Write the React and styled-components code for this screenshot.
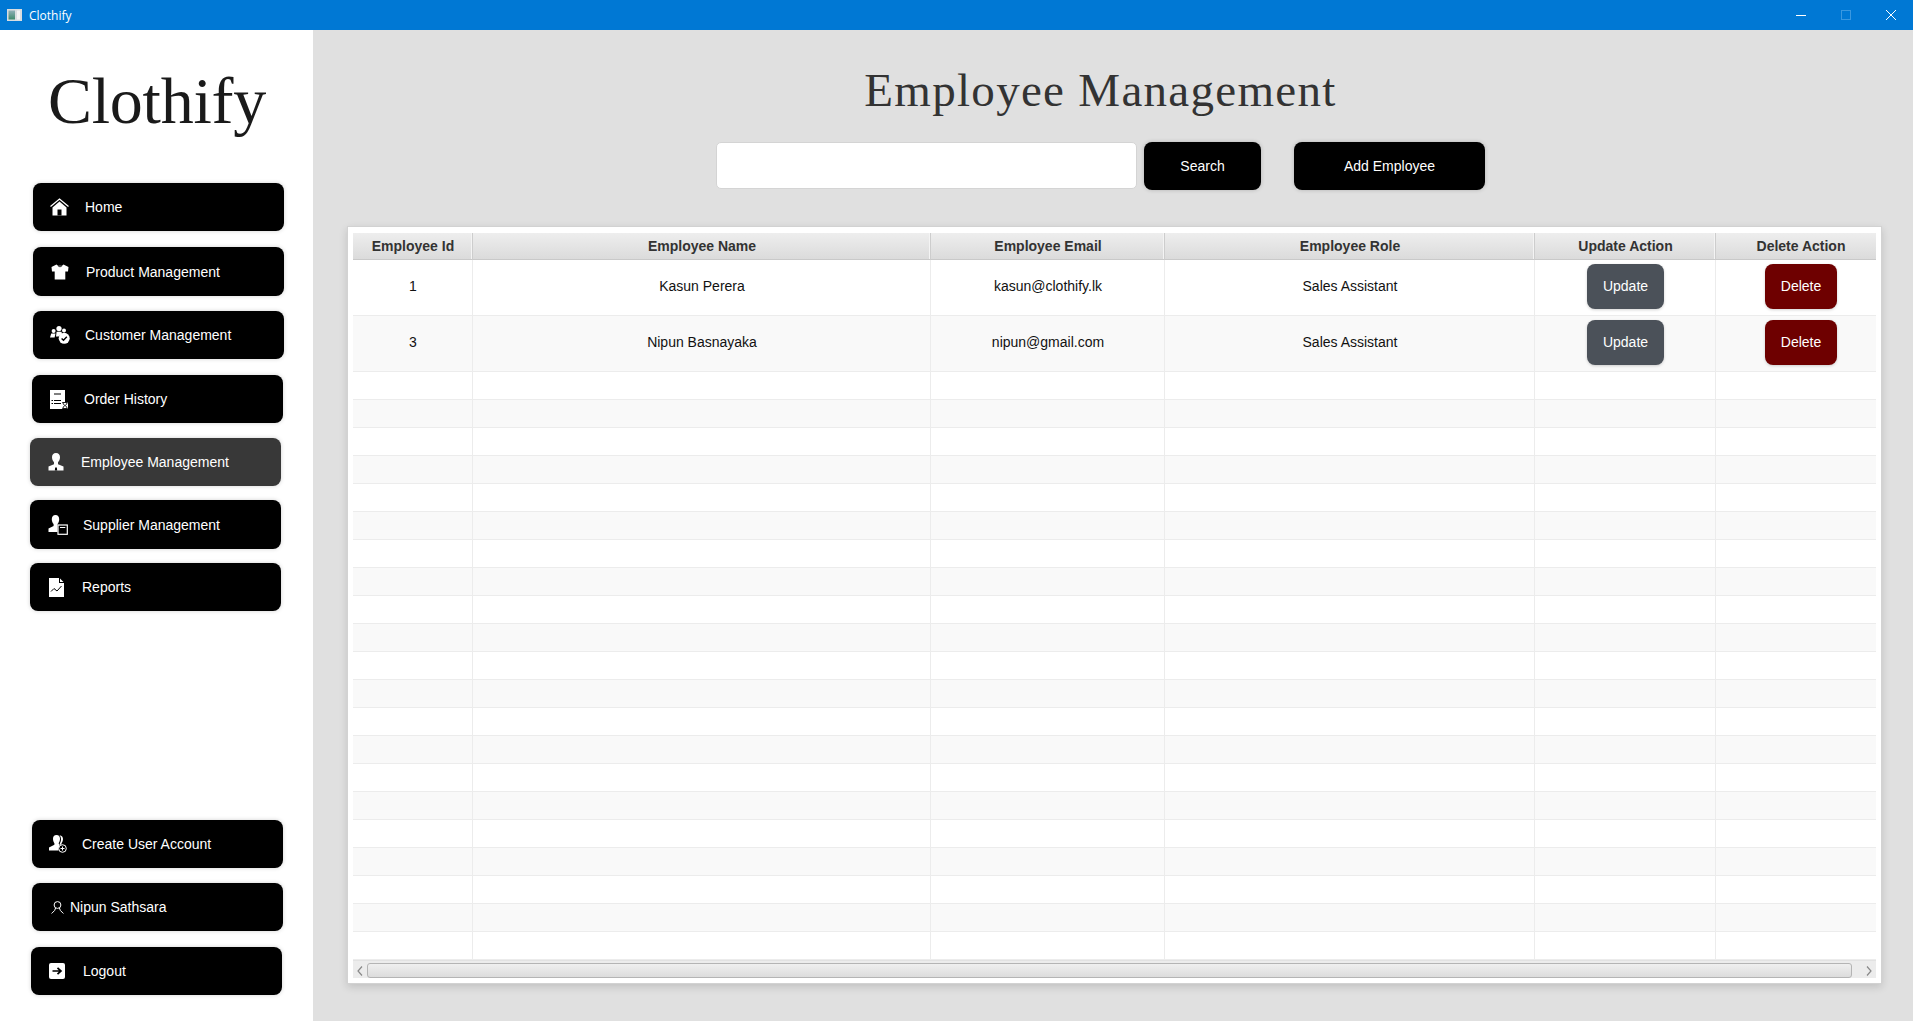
import React from 'react';
import styled, { createGlobalStyle } from 'styled-components';

const GlobalStyle = createGlobalStyle`
  html, body, #root {
    margin: 0;
    height: 100%;
  }
  body {
    overflow: hidden;
    font-family: "Liberation Sans", Arial, sans-serif;
    background: #e0e0e0;
  }
  * { box-sizing: border-box; }
`;

const Window = styled.div`
  width: 1913px;
  height: 1021px;
  display: flex;
  flex-direction: column;
`;

const TitleBar = styled.header`
  height: 30px;
  flex-shrink: 0;
  background: #0078d4;
  color: #fff;
  display: flex;
  align-items: center;
  padding-left: 7px;
  font: 12px "Open Sans", sans-serif;
`;

const AppName = styled.span`
  margin-left: 7px;
`;

const WindowControls = styled.div`
  margin-left: auto;
  display: flex;
  align-items: center;
  padding-right: 17px;
  gap: 35px;
  svg { display: block; }
`;

const Body = styled.div`
  flex: 1;
  display: flex;
  min-height: 0;
`;

const Sidebar = styled.aside`
  width: 313px;
  flex-shrink: 0;
  background: #fff;
  display: flex;
  flex-direction: column;
  padding-bottom: 26px;
`;

const Logo = styled.div`
  height: 104px;
  margin-top: 33px;
  padding-left: 48px;
  font: 66px/76px "Liberation Serif", serif;
  letter-spacing: -0.25px;
  color: #1a1a1a;
`;

const NavGroup = styled.nav`
  display: flex;
  flex-direction: column;
  margin-top: ${p => p.$top || '16px'};
`;

const NavButton = styled.div`
  position: relative;
  width: 251px;
  height: ${p => p.$h || 48}px;
  margin-left: ${p => p.$x}px;
  margin-top: ${p => p.$gap}px;
  padding-left: ${p => p.$iconAt}px;
  display: flex;
  align-items: center;
  background: ${p => (p.$active ? '#383838' : '#000')};
  border-radius: 8px;
  box-shadow: 0 0 4px rgba(0, 0, 0, 0.18);
  color: #fff;
  font-size: 14px;
  svg { display: block; flex-shrink: 0; }
`;

const NavLabel = styled.span`
  margin-left: ${p => p.$gap}px;
`;

const Main = styled.main`
  flex: 1;
  display: flex;
  flex-direction: column;
  padding: 0 31px 37px 34px;
  min-width: 0;
`;

const PageTitle = styled.h1`
  margin: 32px 28px 0 0;
  height: 80px;
  text-align: center;
  font: 400 47px/56px "Liberation Serif", serif;
  letter-spacing: 1.3px;
  color: #333;
`;

const Toolbar = styled.div`
  height: 48px;
  display: flex;
  align-items: flex-start;
  padding-left: 369px;
`;

const SearchInput = styled.input`
  width: 421px;
  height: 47px;
  border: 1px solid #d4d4d4;
  border-radius: 5px;
  background: #fff;
  outline: none;
`;

const BlackButton = styled.button`
  width: ${p => p.$w}px;
  height: 48px;
  margin-left: ${p => p.$gap}px;
  border: 0;
  border-radius: 8px;
  background: #000;
  color: #fff;
  font: 14px "Liberation Sans", sans-serif;
  box-shadow: 0 0 4px rgba(0, 0, 0, 0.2);
`;

const Card = styled.section`
  margin-top: 36px;
  height: 758px;
  background: #fff;
  border: 1px solid #d2d2d2;
  padding: 6px 5px 5px;
  box-shadow: 0 3px 8px rgba(0, 0, 0, 0.14);
  display: flex;
  flex-direction: column;
`;

const TableWrap = styled.div`
  height: 727px;
  overflow: hidden;
  flex-shrink: 0;
`;

const Table = styled.table`
  width: 1533px;
  table-layout: fixed;
  border-collapse: separate;
  border-spacing: 0;
`;

const Col = styled.col`
  width: ${p => p.$w}px;
`;

const HeadCell = styled.th`
  height: 27px;
  padding: 0 0 0 1px;
  background: linear-gradient(#eeeeee, #dbdbdb);
  border-bottom: 1px solid #c9c9c9;
  border-right: 1px solid #cdcdcd;
  box-shadow: inset -1px 0 0 #f4f4f4;
  color: #333;
  font-size: 14px;
  font-weight: 700;
  text-align: center;
  vertical-align: middle;
`;

const Row = styled.tr`
  background: ${p => (p.$odd ? '#f9f9f9' : '#fff')};
`;

const Cell = styled.td`
  height: ${p => (p.$tall ? 56 : 28)}px;
  padding: 0 0 ${p => (p.$tall ? 3 : 1)}px 1px;
  border-bottom: 1px solid #ececec;
  border-right: 1px solid #ececec;
  color: #111;
  font-size: 14px;
  text-align: center;
  vertical-align: middle;
`;

const ActionButton = styled.button`
  display: block;
  margin: 0 auto;
  width: ${p => p.$w}px;
  height: 45px;
  border: 0;
  border-radius: 8px;
  background: ${p => p.$bg};
  color: #fff;
  font: 14px "Liberation Sans", sans-serif;
  box-shadow: 0 1px 3px rgba(0, 0, 0, 0.18);
`;

const ScrollBar = styled.div`
  height: 18px;
  flex-shrink: 0;
  display: flex;
  align-items: center;
  background: #ececec;
  border-top: 1px solid #e2e2e2;
  padding-top: 2px;
`;

const ScrollArrow = styled.div`
  width: 14px;
  flex-shrink: 0;
  display: flex;
  justify-content: center;
  svg { display: block; }
`;

const ScrollThumb = styled.div`
  flex: 1;
  height: 15px;
  margin-right: 10px;
  border: 1px solid #b4b4b4;
  border-radius: 3px;
  background: linear-gradient(#efefef, #dcdcdc);
`;

const HomeIcon = () => (
  <svg width="19" height="18" viewBox="0 0 19 18">
    <path d="M0.5 8.5 9.5 1 18.5 8.5" fill="none" stroke="#fff" strokeWidth="1.3" />
    <path d="M2.5 9.5 9.5 3.6 16.5 9.5V17.5H2.5Z" fill="#fff" />
    <rect x="7.5" y="11.5" width="4" height="6" fill="#000" />
  </svg>
);

const ShirtIcon = () => (
  <svg width="18" height="16" viewBox="0 0 18 16">
    <path d="M5.5 0.5 7 1.8h4L12.5 0.5 17.5 3 17 7.4 14.3 7.4V15.5H3.7V7.4L1 7.4 0.5 3Z" fill="#fff" />
    <path d="M7 1.8Q9 4 11 1.8" fill="none" stroke="#000" strokeWidth="0.8" />
  </svg>
);

const CustomerIcon = () => (
  <svg width="20" height="18" viewBox="0 0 20 18">
    <circle cx="9" cy="2.6" r="2.6" fill="#fff" />
    <circle cx="3.6" cy="5" r="2" fill="#fff" />
    <circle cx="14" cy="4.6" r="2" fill="#fff" />
    <path d="M0 11.5 1.2 7.5H5.5L4.6 11.5Z M6 10.5 6.6 5.8H11.5L12 8 8.5 10.5Z" fill="#fff" />
    <circle cx="14.2" cy="12.3" r="5.5" fill="#fff" />
    <path d="M11.6 12.4 13.5 14.3 16.8 10.8" fill="none" stroke="#000" strokeWidth="1.4" />
  </svg>
);

const OrderIcon = () => (
  <svg width="18" height="19" viewBox="0 0 18 19">
    <path d="M0 0H15V12H18V19H0Z" fill="#fff" />
    <path d="M4 3.5H11V4.5H4Z M4 10H11V11H4Z M4 13H11V14H4Z M1.5 10H3V11H1.5Z M1.5 13H3V14H1.5Z" fill="#000" />
    <path d="M12.5 12.5H17.5L15.5 15.5 17.5 18.5H12.5L14.5 15.5Z" fill="none" stroke="#000" strokeWidth="0.9" />
  </svg>
);

const EmployeeIcon = () => (
  <svg width="16" height="18" viewBox="0 0 16 18">
    <path d="M8 0C5.4 0 4 1.8 4 4.2 4 6.2 5 8.2 6 9.2V11.2L0.5 13.5V17.5H15.5V13.5L10 11.2V9.2C11 8.2 12 6.2 12 4.2 12 1.8 10.6 0 8 0Z" fill="#fff" />
    <path d="M7.2 14.5H8.8L9.2 17.5H6.8Z" fill="#000" />
  </svg>
);

const SupplierIcon = () => (
  <svg width="20" height="20" viewBox="0 0 20 20">
    <path d="M7.5 0C5 0 3.8 1.9 3.8 4.2 3.8 6.2 4.6 8 5.6 9V11L0.5 13.5V17H9.5V11.5L9.5 9C10.4 8 11.2 6.2 11.2 4.2 11.2 1.9 10 0 7.5 0Z" fill="#fff" />
    <rect x="10" y="10" width="9.3" height="9.3" fill="#000" stroke="#fff" strokeWidth="1.2" />
    <path d="M12 12.5H17.3" stroke="#fff" strokeWidth="1" />
  </svg>
);

const ReportIcon = () => (
  <svg width="15" height="19" viewBox="0 0 15 19">
    <path d="M0 0H10L10 5H15V19H0Z" fill="#fff" />
    <path d="M11 0.5 14.5 4H11Z" fill="#fff" />
    <path d="M2 13.5 5 10.5 8 13 12.5 8" fill="none" stroke="#000" strokeWidth="1" />
  </svg>
);

const AddUserIcon = () => (
  <svg width="18" height="18" viewBox="0 0 18 18">
    <path d="M7.5 0C5.2 0 4 1.6 4 3.8 4 5.6 4.6 7.2 5.4 8.2V9.8L0 12.4V15.5H9.5L10.5 10 9.6 8.2C10.4 7.2 11 5.6 11 3.8 11 1.6 9.8 0 7.5 0Z" fill="#fff" />
    <path d="M10.5 0.3C13 0.6 14 2.2 14 4 14 5.8 13.2 7.4 12.5 8.2V9.6L10.5 10 11 8C12.3 6 12.6 2.5 10.5 0.3Z" fill="#fff" />
    <circle cx="13.5" cy="13.5" r="3.8" fill="#000" stroke="#fff" strokeWidth="1" />
    <path d="M11.5 13.5H15.5M13.5 11.5V15.5" stroke="#fff" strokeWidth="1" />
  </svg>
);

const UserOutlineIcon = () => (
  <svg width="13" height="13" viewBox="0 0 13 13">
    <circle cx="6.5" cy="4" r="3.4" fill="none" stroke="#fff" strokeWidth="1" />
    <path d="M4.6 7 3.6 9.5 0.6 12.5M8.4 7 9.4 9.5 12.4 12.5" fill="none" stroke="#fff" strokeWidth="1" />
  </svg>
);

const LogoutIcon = () => (
  <svg width="16" height="16" viewBox="0 0 16 16">
    <rect width="16" height="16" rx="2" fill="#fff" />
    <path d="M3.5 8H11.5M8.5 4.8 12 8 8.5 11.2" fill="none" stroke="#000" strokeWidth="1.7" />
  </svg>
);

const AppIcon = () => (
  <svg width="15" height="12" viewBox="0 0 15 12">
    <defs>
      <linearGradient id="app-icon" x1="0" y1="0" x2="0" y2="1">
        <stop offset="0" stopColor="#8fb0b8" />
        <stop offset="1" stopColor="#3f8a6c" />
      </linearGradient>
    </defs>
    <rect width="15" height="12" fill="#d8dde0" />
    <rect x="1.5" y="1.5" width="6.5" height="9" fill="url(#app-icon)" />
    <rect x="10" y="1.5" width="3" height="9" fill="#f4f4f4" />
  </svg>
);

const topNav = [
  { label: 'Home', Icon: HomeIcon, x: 33, gap: 0, iconAt: 17, text: 16 },
  { label: 'Product Management', Icon: ShirtIcon, x: 33, gap: 16, h: 49, iconAt: 18, text: 17 },
  { label: 'Customer Management', Icon: CustomerIcon, x: 33, gap: 15, iconAt: 17, text: 15 },
  { label: 'Order History', Icon: OrderIcon, x: 32, gap: 16, iconAt: 18, text: 16 },
  { label: 'Employee Management', Icon: EmployeeIcon, x: 30, gap: 15, iconAt: 18, text: 17, active: true },
  { label: 'Supplier Management', Icon: SupplierIcon, x: 30, gap: 14, h: 49, iconAt: 18, text: 15 },
  { label: 'Reports', Icon: ReportIcon, x: 30, gap: 14, iconAt: 19, text: 18 },
];

const bottomNav = [
  { label: 'Create User Account', Icon: AddUserIcon, x: 32, gap: 0, iconAt: 17, text: 15 },
  { label: 'Nipun Sathsara', Icon: UserOutlineIcon, x: 32, gap: 15, iconAt: 19, text: 6 },
  { label: 'Logout', Icon: LogoutIcon, x: 31, gap: 16, iconAt: 18, text: 18 },
];

const columns = [
  { title: 'Employee Id', width: 120 },
  { title: 'Employee Name', width: 458 },
  { title: 'Employee Email', width: 234 },
  { title: 'Employee Role', width: 370 },
  { title: 'Update Action', width: 181 },
  { title: 'Delete Action', width: 170 },
];

const employees = [
  { id: 1, name: 'Kasun Perera', email: 'kasun@clothify.lk', role: 'Sales Assistant' },
  { id: 3, name: 'Nipun Basnayaka', email: 'nipun@gmail.com', role: 'Sales Assistant' },
];

const EMPTY_ROWS = 21;

const renderNav = item => (
  <NavButton
    key={item.label}
    $x={item.x}
    $gap={item.gap}
    $h={item.h}
    $iconAt={item.iconAt}
    $active={item.active}
  >
    <item.Icon />
    <NavLabel $gap={item.text}>{item.label}</NavLabel>
  </NavButton>
);

const App = () => {
  return (
    <Window>
      <GlobalStyle />
      <TitleBar>
        <AppIcon />
        <AppName>Clothify</AppName>
        <WindowControls>
          <svg width="10" height="10" viewBox="0 0 10 10">
            <path d="M0 5.5H10" stroke="#fff" strokeWidth="1" />
          </svg>
          <svg width="10" height="10" viewBox="0 0 10 10">
            <rect x="0.5" y="0.5" width="9" height="9" fill="none" stroke="#3a98e0" strokeWidth="1" />
          </svg>
          <svg width="10" height="10" viewBox="0 0 10 10">
            <path d="M0 0 10 10M10 0 0 10" stroke="#fff" strokeWidth="1" />
          </svg>
        </WindowControls>
      </TitleBar>
      <Body>
        <Sidebar>
          <Logo>Clothify</Logo>
          <NavGroup>{topNav.map(renderNav)}</NavGroup>
          <NavGroup $top="auto">{bottomNav.map(renderNav)}</NavGroup>
        </Sidebar>
        <Main>
          <PageTitle>Employee Management</PageTitle>
          <Toolbar>
            <SearchInput />
            <BlackButton $w={117} $gap={7}>Search</BlackButton>
            <BlackButton $w={191} $gap={33}>Add Employee</BlackButton>
          </Toolbar>
          <Card>
            <TableWrap>
              <Table>
                <colgroup>
                  {columns.map(c => <Col key={c.title} $w={c.width} />)}
                </colgroup>
                <thead>
                  <tr>
                    {columns.map(c => <HeadCell key={c.title}>{c.title}</HeadCell>)}
                  </tr>
                </thead>
                <tbody>
                  {employees.map((e, i) => (
                    <Row key={e.id} $odd={i % 2 === 1}>
                      <Cell $tall>{e.id}</Cell>
                      <Cell $tall>{e.name}</Cell>
                      <Cell $tall>{e.email}</Cell>
                      <Cell $tall>{e.role}</Cell>
                      <Cell $tall><ActionButton $w={77} $bg="#4b5159">Update</ActionButton></Cell>
                      <Cell $tall><ActionButton $w={72} $bg="#6e0000">Delete</ActionButton></Cell>
                    </Row>
                  ))}
                  {Array.from({ length: EMPTY_ROWS }, (_, i) => (
                    <Row key={i} $odd={i % 2 === 1}>
                      {columns.map(c => <Cell key={c.title} />)}
                    </Row>
                  ))}
                </tbody>
              </Table>
            </TableWrap>
            <ScrollBar>
              <ScrollArrow>
                <svg width="6" height="10" viewBox="0 0 6 10">
                  <path d="M5 0.5 1 5 5 9.5" fill="none" stroke="#888" strokeWidth="1.2" />
                </svg>
              </ScrollArrow>
              <ScrollThumb />
              <ScrollArrow>
                <svg width="6" height="10" viewBox="0 0 6 10">
                  <path d="M1 0.5 5 5 1 9.5" fill="none" stroke="#888" strokeWidth="1.2" />
                </svg>
              </ScrollArrow>
            </ScrollBar>
          </Card>
        </Main>
      </Body>
    </Window>
  );
};

export default App;
